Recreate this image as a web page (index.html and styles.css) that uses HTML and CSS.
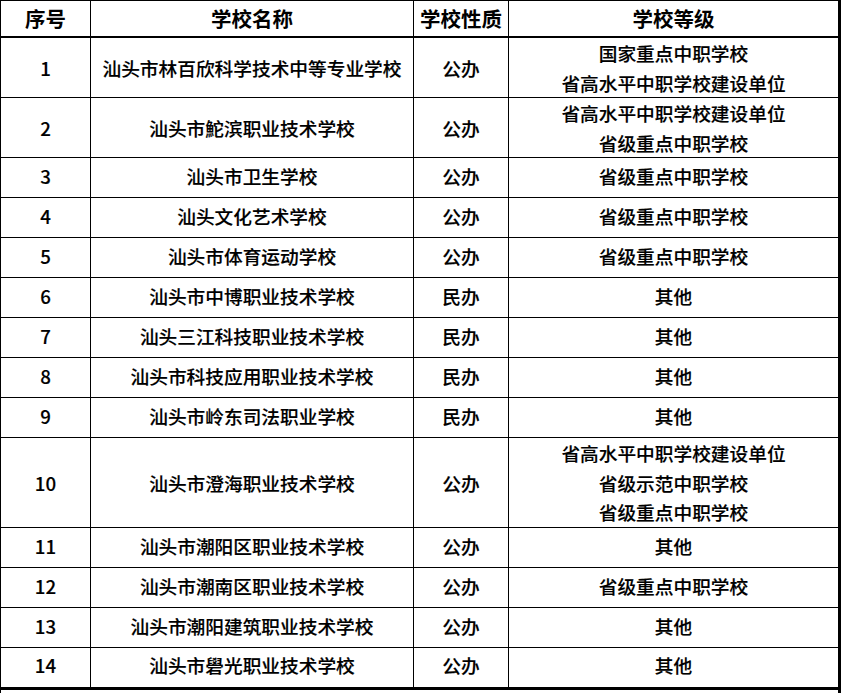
FILE: index.html
```html
<!DOCTYPE html>
<html lang="zh-CN">
<head>
<meta charset="utf-8">
<title>汕头市中职学校</title>
<link rel="stylesheet" href="styles.css">
</head>
<body>
<div class="frame">
<table class="schools">
<thead>
<tr>
<th class="c1">序号</th>
<th class="c2">学校名称</th>
<th class="c3">学校性质</th>
<th class="c4">学校等级</th>
</tr>
</thead>
<tbody>
<tr class="r2"><td>1</td><td>汕头市林百欣科学技术中等专业学校</td><td>公办</td><td>国家重点中职学校<br>省高水平中职学校建设单位</td></tr>
<tr class="r2"><td>2</td><td>汕头市鮀滨职业技术学校</td><td>公办</td><td>省高水平中职学校建设单位<br>省级重点中职学校</td></tr>
<tr class="r1"><td>3</td><td>汕头市卫生学校</td><td>公办</td><td>省级重点中职学校</td></tr>
<tr class="r1"><td>4</td><td>汕头文化艺术学校</td><td>公办</td><td>省级重点中职学校</td></tr>
<tr class="r1"><td>5</td><td>汕头市体育运动学校</td><td>公办</td><td>省级重点中职学校</td></tr>
<tr class="r1"><td>6</td><td>汕头市中博职业技术学校</td><td>民办</td><td>其他</td></tr>
<tr class="r1"><td>7</td><td>汕头三江科技职业技术学校</td><td>民办</td><td>其他</td></tr>
<tr class="r1"><td>8</td><td>汕头市科技应用职业技术学校</td><td>民办</td><td>其他</td></tr>
<tr class="r1"><td>9</td><td>汕头市岭东司法职业学校</td><td>民办</td><td>其他</td></tr>
<tr class="r3"><td>10</td><td>汕头市澄海职业技术学校</td><td>公办</td><td>省高水平中职学校建设单位<br>省级示范中职学校<br>省级重点中职学校</td></tr>
<tr class="r1"><td>11</td><td>汕头市潮阳区职业技术学校</td><td>公办</td><td>其他</td></tr>
<tr class="r1"><td>12</td><td>汕头市潮南区职业技术学校</td><td>公办</td><td>省级重点中职学校</td></tr>
<tr class="r1"><td>13</td><td>汕头市潮阳建筑职业技术学校</td><td>公办</td><td>其他</td></tr>
<tr class="r1 last"><td>14</td><td>汕头市礐光职业技术学校</td><td>公办</td><td>其他</td></tr>
</tbody>
</table>
</div>
</body>
</html>
```

FILE: styles.css
```css
html, body {
  margin: 0;
  padding: 0;
  background: #fff;
}

.frame {
  box-sizing: border-box;
  width: 841px;
  height: 693px;
  border-left: 1px solid #000;
  border-right: 3px solid #000;
  overflow: hidden;
}

.schools {
  width: 837px;
  table-layout: fixed;
  border-collapse: separate;
  border-spacing: 0;
  border-top: 1px solid #000;
  font-family: "Noto Sans CJK SC", "Noto Sans", sans-serif;
  color: #000;
}

.schools th,
.schools td {
  box-sizing: border-box;
  padding: 0;
  text-align: center;
  vertical-align: middle;
  border-right: 1px solid #000;
  border-bottom: 1px solid #000;
  white-space: nowrap;
}

.schools th:last-child,
.schools td:last-child {
  border-right: none;
}

.schools th {
  height: 37px;
  border-bottom: 2px solid #000;
  font-size: 20.5px;
  font-weight: 700;
  line-height: 35px;
}

.c1 { width: 90px; }
.c2 { width: 323px; }
.c3 { width: 95px; }
.c4 { width: 329px; }

.schools td {
  font-size: 18.7px;
  font-weight: 500;
  line-height: 29.5px;
  -webkit-text-stroke: 0.15px #000;
}

.r1 td {
  height: 40px;
  padding-bottom: 4px;
}
.r2 td { height: 60px; }
.r3 td { height: 90px; }

.last td {
  height: 42px;
  padding-bottom: 5px;
  border-bottom: 3px solid #000;
}
```
